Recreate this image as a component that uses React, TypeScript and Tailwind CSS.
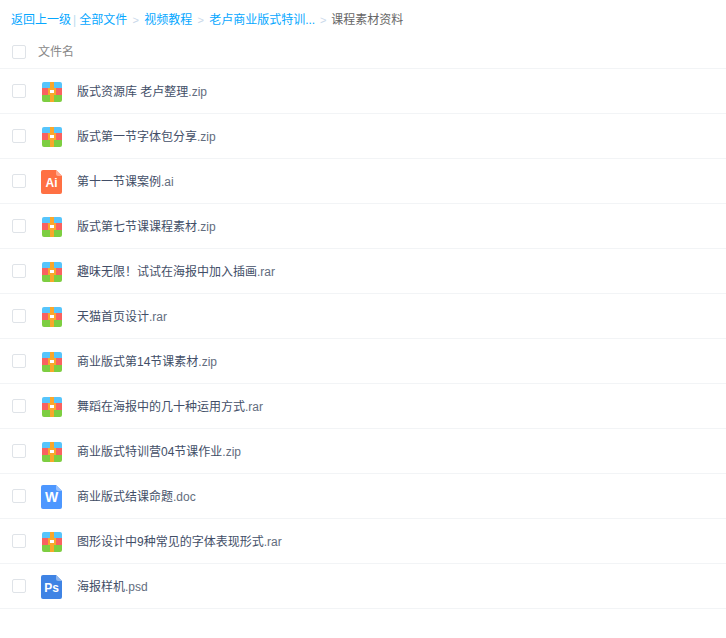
import React from "react";

function Zip() {
  return (
    <svg width="20" height="20" viewBox="0 0 20 20" className="block">
      <path d="M2 0H18A2 2 0 0 1 20 2V6H0V2A2 2 0 0 1 2 0Z" fill="#56c5fb" />
      <rect x="0" y="6" width="20" height="7" fill="#f9615f" />
      <path d="M0 13H20V18A2 2 0 0 1 18 20H2A2 2 0 0 1 0 18Z" fill="#7dce41" />
      <rect x="8" y="0" width="4" height="20" fill="#f9a72b" />
      <rect x="6" y="6" width="8" height="7" fill="#f9a72b" />
      <rect x="8" y="8" width="4" height="3" fill="#fff" />
    </svg>
  );
}

function Doc({ color, fold, label, size }: { color: string; fold: string; label: string; size: number }) {
  return (
    <svg width="21" height="24" viewBox="0 0 21 24" className="block">
      <path d="M2 0H15L21 6V22A2 2 0 0 1 19 24H2A2 2 0 0 1 0 22V2A2 2 0 0 1 2 0Z" fill={color} />
      <path d="M15 0L21 6H17A2 2 0 0 1 15 4Z" fill={fold} />
      <text x="10.5" y="17" textAnchor="middle" fill="#fff" fontSize={size} fontWeight="700" fontFamily="'Liberation Sans', sans-serif">
        {label}
      </text>
    </svg>
  );
}

type Kind = "zip" | "ai" | "w" | "ps";

const files: { name: string; ext: string; kind: Kind }[] = [
  { name: "版式资源库 老卢整理", ext: ".zip", kind: "zip" },
  { name: "版式第一节字体包分享", ext: ".zip", kind: "zip" },
  { name: "第十一节课案例", ext: ".ai", kind: "ai" },
  { name: "版式第七节课课程素材", ext: ".zip", kind: "zip" },
  { name: "趣味无限！试试在海报中加入插画", ext: ".rar", kind: "zip" },
  { name: "天猫首页设计", ext: ".rar", kind: "zip" },
  { name: "商业版式第14节课素材", ext: ".zip", kind: "zip" },
  { name: "舞蹈在海报中的几十种运用方式", ext: ".rar", kind: "zip" },
  { name: "商业版式特训营04节课作业", ext: ".zip", kind: "zip" },
  { name: "商业版式结课命题", ext: ".doc", kind: "w" },
  { name: "图形设计中9种常见的字体表现形式", ext: ".rar", kind: "zip" },
  { name: "海报样机", ext: ".psd", kind: "ps" },
];

function Icon({ kind }: { kind: Kind }) {
  if (kind === "zip") return <div className="mt-[2px]"><Zip /></div>;
  if (kind === "ai") return <div className="mt-[2px]"><Doc color="#ff7043" fold="#ffa98f" label="Ai" size={12} /></div>;
  if (kind === "w") return <div className="mt-[2px]"><Doc color="#4d97ff" fold="#94c0ff" label="W" size={14} /></div>;
  return <div className="mt-[2px]"><Doc color="#3f83e4" fold="#8db5ee" label="Ps" size={12} /></div>;
}

function Check() {
  return <span className="block w-[14px] h-[14px] rounded-[2px] border border-[#dfe3e8] bg-white" />;
}

export default function App() {
  return (
    <div className="w-[726px] h-[638px] bg-white overflow-hidden text-[12px] font-['Liberation_Sans','Noto_Sans_CJK_SC',sans-serif]">
      <div className="flex items-center h-[20px] mt-[10px] pl-[11px] text-[#06a7ff] whitespace-nowrap">
        <span>返回上一级</span>
        <span className="ml-[2px] mr-[3px] text-[#bcdcf0]">|</span>
        <span>全部文件</span>
        <span className="w-[17px] text-center text-[#c9d8ea] text-[11px]">&gt;</span>
        <span>视频教程</span>
        <span className="w-[17px] text-center text-[#c9d8ea] text-[11px]">&gt;</span>
        <span>老卢商业版式特训...</span>
        <span className="w-[16px] text-center text-[#c9d8ea] text-[11px]">&gt;</span>
        <span className="text-[#666]">课程素材资料</span>
      </div>
      <div className="flex items-center h-[39px] border-b border-[#f2f4f6] pl-[12px] pt-[6px] text-[#888]">
        <Check />
        <span className="ml-[12px] -mt-[1px]">文件名</span>
      </div>
      {files.map((f, i) => (
        <div key={i} className="flex items-center h-[45px] border-b border-[#f2f4f6] pl-[12px]">
          <div className="w-[14px]">
            <Check />
          </div>
          <div className="w-[21px] ml-[15px] flex justify-end">
            <Icon kind={f.kind} />
          </div>
          <span className="ml-[15px] mt-[2px] text-[#424e67] whitespace-pre">
            {f.name}
            <span className="text-[#636d7e]">{f.ext}</span>
          </span>
        </div>
      ))}
    </div>
  );
}
